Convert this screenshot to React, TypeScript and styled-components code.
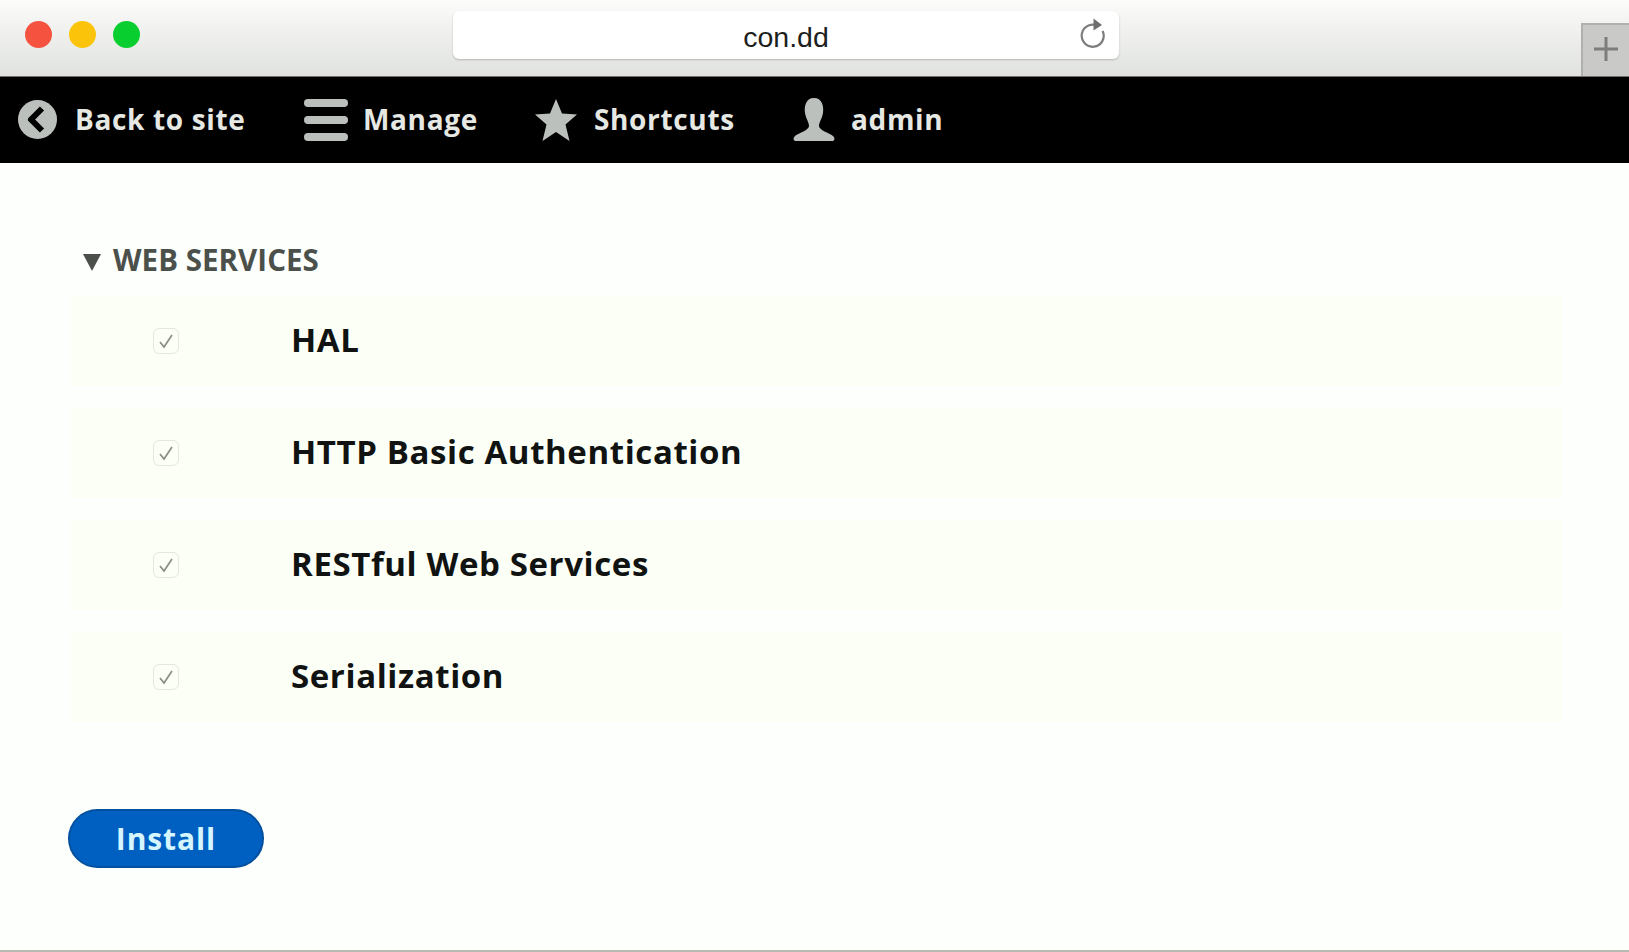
import React from "react";
import styled, { createGlobalStyle } from "styled-components";

const GlobalStyle = createGlobalStyle`
  html, body {
    margin: 0;
    padding: 0;
    background: #fdfffc;
    overflow: hidden;
  }
`;

const Page = styled.div`
  display: flex;
  flex-direction: column;
  width: 1629px;
  height: 952px;
  box-sizing: border-box;
  border-bottom: 2px solid #b9b9b4;
  background: #fdfffc;
`;

// browser chrome
const Chrome = styled.header`
  display: flex;
  height: 76px;
  box-sizing: border-box;
  padding-left: 25px;
  background: linear-gradient(#fcfcfa, #f3f4f2 30%, #e0e2e0);
`;
const Lights = styled.div`
  display: flex;
  gap: 17px;
  width: 428px;
  padding-top: 21px;
`;
const Light = styled.span<{ $color: string }>`
  width: 27px;
  height: 27px;
  border-radius: 50%;
  background: ${(p) => p.$color};
`;
const UrlBar = styled.div`
  position: relative;
  display: flex;
  align-items: center;
  justify-content: center;
  width: 666px;
  height: 48px;
  margin-top: 11px;
  padding-top: 4px;
  box-sizing: border-box;
  border-radius: 6px;
  background: #fff;
  box-shadow: 0 1px 2px rgba(0, 0, 0, 0.22);
  font: 28.5px "Liberation Sans", Arial, sans-serif;
  color: #1d1f1e;
`;
const Reload = styled.svg`
  position: absolute;
  right: 13px;
  top: 6px;
  width: 28px;
  height: 32px;
`;
const NewTab = styled.div`
  display: flex;
  align-items: center;
  justify-content: center;
  align-self: flex-end;
  width: 48px;
  height: 53px;
  margin-left: auto;
  padding-bottom: 4px;
  box-sizing: border-box;
  border: 2px solid #b0b1af;
  border-width: 2px 0 0 2px;
  background: #c9cac8;
`;

// admin toolbar
const Toolbar = styled.nav`
  display: flex;
  align-items: center;
  height: 87px;
  box-sizing: border-box;
  padding: 0 0 1px 18px;
  border-top: 1px solid #6f706e;
  background: #000;
  font: 700 28px "Open Sans", sans-serif;
  color: #e6e8e4;
`;
const ToolItem = styled.div<{ $gap: number; $width: number }>`
  display: flex;
  align-items: center;
  gap: ${(p) => p.$gap}px;
  width: ${(p) => p.$width}px;
  letter-spacing: 0.65px;
`;
const ToolLabel = styled.span`
  margin-bottom: 1px;
`;

// module list
const Content = styled.main`
  display: flex;
  flex-direction: column;
  padding: 78px 67px 0 71px;
`;
const GroupTitle = styled.div`
  display: flex;
  align-items: center;
  gap: 12px;
  height: 36px;
  margin-bottom: 19px;
  padding-left: 12px;
  font: 700 29.5px "Open Sans", sans-serif;
  letter-spacing: 0.05px;
  color: #4b504b;
`;
const Triangle = styled.span`
  width: 0;
  height: 0;
  margin-top: 7px;
  border-left: 9.5px solid transparent;
  border-right: 9.5px solid transparent;
  border-top: 17px solid #4b504b;
`;
const Rows = styled.div`
  display: flex;
  flex-direction: column;
  gap: 22px;
`;
const Row = styled.div`
  display: flex;
  align-items: center;
  height: 90px;
  padding-left: 82px;
  background: #fbfff5;
`;
const Check = styled.span`
  display: flex;
  align-items: center;
  justify-content: center;
  width: 26px;
  height: 26px;
  box-sizing: border-box;
  border: 1.5px solid #e6e8df;
  border-radius: 6px;
  margin-right: 112px;
`;
const RowLabel = styled.label`
  margin-bottom: 3px;
  font: 700 33px "Open Sans", sans-serif;
  color: #101311;
  letter-spacing: 0.6px;
`;
const InstallButton = styled.button`
  align-self: flex-start;
  width: 196px;
  height: 59px;
  margin: 87px 0 0 -3px;
  padding: 0;
  border: 2px solid #03509e;
  border-radius: 30px;
  background: #0060c2;
  font: 700 30px "Open Sans", sans-serif;
  letter-spacing: 0.9px;
  color: #d6f6ff;
`;

const modules = ["HAL", "HTTP Basic Authentication", "RESTful Web Services", "Serialization"];
const iconFill = "#bcc0bc";

export default function App() {
  return (
    <Page>
      <GlobalStyle />
      <Chrome>
        <Lights>
          <Light $color="#f5523f" />
          <Light $color="#fbc40a" />
          <Light $color="#08cf2f" />
        </Lights>
        <UrlBar>
          con.dd
          <Reload viewBox="0 0 28 32" fill="none">
            <path d="M20.6 9.5 A11 11 0 1 0 24.6 14" stroke="#7b7d7b" strokeWidth="2.2" />
            <path d="M15.500 1.500 L24 8 L15.500 13.500 Z" fill="#6d6f6d" />
          </Reload>
        </UrlBar>
        <NewTab>
          <svg width="26" height="26" viewBox="0 0 26 26">
            <path d="M13 1v24M1 13h24" stroke="#7d7e7c" strokeWidth="3" />
          </svg>
        </NewTab>
      </Chrome>
      <Toolbar>
        <ToolItem $gap={18} $width={286}>
          <svg width="39" height="39" viewBox="0 0 39 39">
            <circle cx="19.5" cy="19.5" r="19.5" fill={iconFill} />
            <path d="M24 8.5 L13 19.5 L24 30.5" fill="none" stroke="#000" strokeWidth="6" strokeLinejoin="round" />
          </svg>
          <ToolLabel>Back to site</ToolLabel>
        </ToolItem>
        <ToolItem $gap={15} $width={231}>
          <svg width="44" height="42" viewBox="0 0 44 42">
            <rect x="0" y="0" width="44" height="8" rx="4" fill={iconFill} />
            <rect x="0" y="17" width="44" height="8" rx="4" fill={iconFill} />
            <rect x="0" y="34" width="44" height="8" rx="4" fill={iconFill} />
          </svg>
          <ToolLabel>Manage</ToolLabel>
        </ToolItem>
        <ToolItem $gap={17} $width={258}>
          <svg width="42" height="42" viewBox="0 0 42 42">
            <path d="M21 0 L27 14.5 L42 15.5 L30.5 25.5 L34.500 42 L21 33 L7.500 42 L11.500 25.500 L0 15.500 L15 14.500 Z" fill={iconFill} />
          </svg>
          <ToolLabel>Shortcuts</ToolLabel>
        </ToolItem>
        <ToolItem $gap={16} $width={170}>
          <svg width="42" height="43" viewBox="0 0 42 43">
            <path d="M21 0 C13 0 11 8 12 15 C13 21 16 24 16 28 C16 32 6 35 2 38 C0 40 0 42 2 43 L40 43 C42 42 42 40 40 38 C36 35 26 32 26 28 C26 24 29 21 30 15 C31 8 29 0 21 0 Z" fill={iconFill} />
          </svg>
          <ToolLabel>admin</ToolLabel>
        </ToolItem>
      </Toolbar>
      <Content>
        <GroupTitle>
          <Triangle />
          WEB SERVICES
        </GroupTitle>
        <Rows>
          {modules.map((name) => (
            <Row key={name}>
              <Check>
                <svg width="16" height="16" viewBox="0 0 16 16">
                  <path d="M2 9 L6 14 L14 2" fill="none" stroke="#8b8d89" strokeWidth="1.7" />
                </svg>
              </Check>
              <RowLabel>{name}</RowLabel>
            </Row>
          ))}
        </Rows>
        <InstallButton>Install</InstallButton>
      </Content>
    </Page>
  );
}
